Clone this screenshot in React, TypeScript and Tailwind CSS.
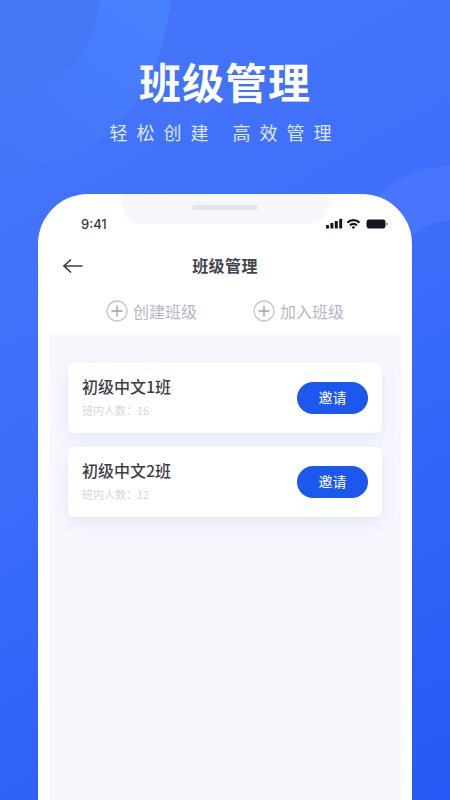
const cjk = "font-['Noto_Sans_CJK_SC','Noto_Sans',sans-serif]";

function Backdrop() {
  return (
    <svg className="absolute inset-0" width="450" height="800" viewBox="0 0 450 800" fill="none">
      <defs>
        <linearGradient id="bg" x1="0" y1="0" x2="450" y2="800" gradientUnits="userSpaceOnUse">
          <stop offset="0" stopColor="#4576f8" />
          <stop offset="0.35" stopColor="#4070fb" />
          <stop offset="1" stopColor="#2459f5" />
        </linearGradient>
        <linearGradient id="band" x1="140" y1="0" x2="20" y2="170" gradientUnits="userSpaceOnUse">
          <stop offset="0" stopColor="#4980fe" />
          <stop offset="1" stopColor="#4375f8" />
        </linearGradient>
      </defs>
      <rect width="450" height="800" fill="url(#bg)" />
      <path d="M0 172C95 168 158 110 171 0H0Z" fill="url(#band)" />
      <path d="M0 98C55 96 92 60 100 0H0Z" fill="#4577f6" />
      <path d="M378 196C398 176 424 167 450 165V220C434 222 422 227 411 236C405 222 394 207 378 196Z" fill="#4776fc" />
    </svg>
  );
}

function Signal() {
  return (
    <svg width="62" height="12" viewBox="0 0 62 12" fill="#15151f">
      <rect x="0" y="7" width="3" height="3.5" rx="0.6" />
      <rect x="4.4" y="5" width="3" height="5.5" rx="0.6" />
      <rect x="8.8" y="3" width="3" height="7.5" rx="0.6" />
      <rect x="13.2" y="0.8" width="3" height="9.7" rx="0.6" />
      <path d="M20.6 3.8a9.6 9.6 0 0 1 13.6 0l-1.5 1.7a7.4 7.4 0 0 0-10.6 0ZM23.2 6.6a5.9 5.9 0 0 1 8.4 0l-1.5 1.6a3.7 3.7 0 0 0-5.4 0ZM25.6 9.2a2.4 2.4 0 0 1 3.6 0l-1.8 1.8Z" />
      <rect x="40.5" y="1.5" width="19" height="9" rx="2.4" />
      <rect x="60.2" y="4.6" width="1.4" height="3" rx="0.7" fillOpacity="0.5" />
    </svg>
  );
}

function AddAction({ label }: { label: string }) {
  return (
    <div className="flex items-center gap-[5px]">
      <svg width="22" height="22" viewBox="0 0 22 22" fill="none" stroke="#c3c5d6">
        <circle cx="11" cy="11" r="10" strokeWidth="1.3" />
        <path d="M11 5.5v11M5.5 11h11" strokeWidth="1.3" stroke="#9a9db3" />
      </svg>
      <span className="text-[16px] leading-[22px] text-[#b5b7c8]">{label}</span>
    </div>
  );
}

function ClassCard({ name, count }: { name: string; count: number }) {
  return (
    <div className="flex h-[70px] items-center justify-between rounded-[6px] bg-white px-[14px] shadow-[0_6px_16px_rgba(90,110,200,0.12)]">
      <div className="mb-[4px] flex flex-col">
        <span className="text-[16px] font-medium leading-[22px] text-[#3e3e48]">{name}</span>
        <span className="mt-[5px] text-[11px] leading-[16px] text-[#d5d5df]">班内人数：{count}</span>
      </div>
      <button className="flex h-[32px] w-[71px] items-center justify-center rounded-full bg-[#1c57ee] pb-[2px] text-[14px] text-white">
        邀请
      </button>
    </div>
  );
}

export default function App() {
  return (
    <div className={`relative h-[800px] w-[450px] overflow-hidden ${cjk}`}>
      <Backdrop />
      <div className="relative flex h-full flex-col items-center">
        <h1 className="mt-[54px] text-[42px] font-bold leading-[54px] tracking-[1px] text-white">班级管理</h1>
        <p className="mt-[11px] flex gap-[15px] text-[18px] leading-[26px] tracking-[9px] text-[#dfe8ff]">
          <span>轻松创建</span>
          <span>高效管理</span>
        </p>

        {/* Phone */}
        <div className="relative mt-[49px] flex w-[374px] flex-1 flex-col rounded-t-[50px] bg-white">
          <div className="absolute left-[83px] top-0 flex h-[30px] w-[208px] justify-center rounded-b-[20px] bg-[#f7f8fd] pt-[11px]">
            <div className="h-[5px] w-[66px] rounded-full bg-[#e3e5f1]" />
          </div>
          <div className="flex h-[45px] items-end justify-between pb-[6px] pl-[43px] pr-[24px]">
            <span className="font-['Inter',sans-serif] text-[13px] font-medium leading-[18px] text-[#3a3a44]">9:41</span>
            <div className="mb-[3px]">
              <Signal />
            </div>
          </div>
          <div className="relative mt-[8px] flex h-[36px] items-center justify-center">
            <svg className="absolute left-[24px] top-[10px]" width="22" height="18" viewBox="0 0 22 18" fill="none" stroke="#3a3a4c" strokeWidth="1.7">
              <path d="M20.5 9H2M9 2.5 2 9l7 6.5" />
            </svg>
            <span className="text-[16px] font-bold tracking-[0.4px] text-[#44444f]">班级管理</span>
          </div>
          <div className="mt-[16px] flex h-[24px] items-center pl-[68px]">
            <AddAction label="创建班级" />
            <div className="ml-[56px]">
              <AddAction label="加入班级" />
            </div>
          </div>
          <div className="mx-[11px] mt-[12px] flex flex-1 flex-col gap-[14px] bg-[#f7f8fe] px-[19px] pt-[28px]">
            <ClassCard name="初级中文1班" count={16} />
            <ClassCard name="初级中文2班" count={12} />
          </div>
        </div>
      </div>
    </div>
  );
}
